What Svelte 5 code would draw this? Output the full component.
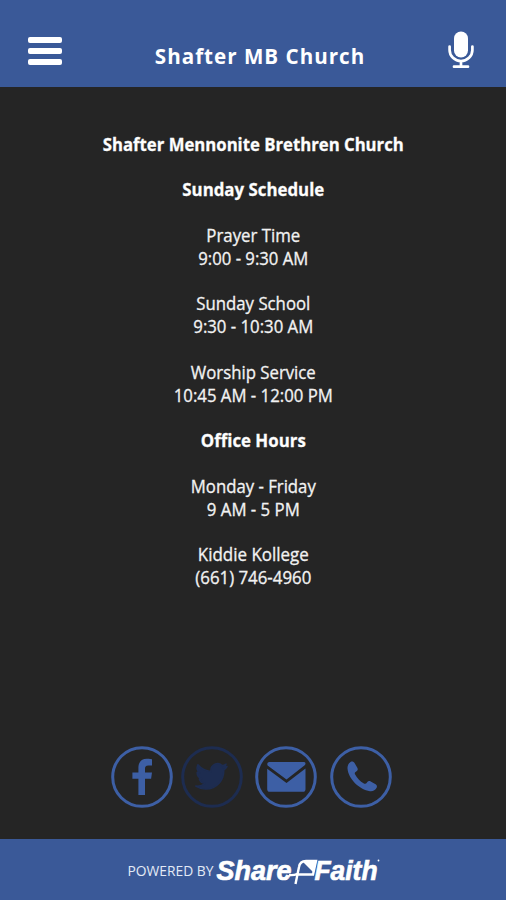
<script lang="ts">
	interface Line {
		text: string;
		width: number;
	}

	interface Block {
		heading?: boolean;
		lines: Line[];
	}

	const blocks: Block[] = [
		{ heading: true, lines: [{ text: 'Shafter Mennonite Brethren Church', width: 301 }] },
		{ heading: true, lines: [{ text: 'Sunday Schedule', width: 142 }] },
		{ lines: [{ text: 'Prayer Time', width: 94 }, { text: '9:00 - 9:30 AM', width: 110 }] },
		{ lines: [{ text: 'Sunday School', width: 114 }, { text: '9:30 - 10:30 AM', width: 120 }] },
		{ lines: [{ text: 'Worship Service', width: 125 }, { text: '10:45 AM - 12:00 PM', width: 159 }] },
		{ heading: true, lines: [{ text: 'Office Hours', width: 105 }] },
		{ lines: [{ text: 'Monday - Friday', width: 125 }, { text: '9 AM - 5 PM', width: 93 }] },
		{ lines: [{ text: 'Kiddie Kollege', width: 111 }, { text: '(661) 746-4960', width: 116 }] }
	];
</script>

<div class="screen">
	<header>
		<button class="menu" aria-label="Menu">
			<span></span>
			<span></span>
			<span></span>
		</button>
		<h1>Shafter MB Church</h1>
		<button class="mic" aria-label="Sermons">
			<svg width="28" height="40" viewBox="0 0 28 40">
				<rect x="7" y="0.5" width="14" height="26" rx="7" fill="#fff" />
				<path d="M2.6 15.5v3.5a11.4 11 0 0 0 22.8 0V15.5M14 30.5v5M7 35.7h14" />
			</svg>
		</button>
	</header>

	<main>
		{#each blocks as block}
			<p class:heading={block.heading}>
				{#each block.lines as line}
					<svg class="line" width="320" height="22.84">
						<text x="160.3" y="17.6" textLength={line.width} lengthAdjust="spacingAndGlyphs">{line.text}</text>
					</svg>
				{/each}
			</p>
		{/each}
	</main>

	<nav>
		<a href="#facebook" aria-label="Facebook">
			<svg viewBox="0 0 62 62">
				<circle cx="31" cy="31" r="29.3" />
				<path d="M41 13.4v6.2h-3.6c-2.8 0-3.4 1.3-3.4 3.3v3.6h7l-.9 6.3H34V49h-6.6V32.800h-6v-6.300h6v-4.800c0-5.700 3.200-8.900 8.500-8.900 2.500 0 4.500.2 5.100.6z" />
			</svg>
		</a>
		<a class="off" href="#twitter" aria-label="Twitter">
			<svg viewBox="0 0 62 62">
				<circle cx="31" cy="31" r="29.3" />
				<path
					class="bird"
					d="M46 20.500c-1.200.6-2.400.9-3.700 1.100 1.300-.8 2.300-2.100 2.800-3.500-1.200.7-2.600 1.300-4 1.500a6.400 6.400 0 0 0-10.900 5.800c-5.300-.3-10-2.800-13.200-6.700a6.400 6.400 0 0 0 2 8.600c-1-.1-2-.3-2.900-.8 0 3.200 2.200 5.800 5.100 6.400-.9.300-1.900.3-2.900.1.8 2.500 3.200 4.400 6 4.400a12.900 12.900 0 0 1-9.500 2.700c2.900 1.900 6.200 2.900 9.800 2.900 12 0 18.500-9.900 18.200-19.100 1.300-.9 2.400-2.100 3.200-3.400z"
				/>
			</svg>
		</a>
		<a href="#email" aria-label="Email">
			<svg viewBox="0 0 62 62">
				<circle cx="31" cy="31" r="29.3" />
				<path d="M14.500 16h34c2 0 2.500 1.200 1.500 3.100L31.500 33.500 12.600 19.600c-.9-1.900 0-3.600 1.900-3.600zM12.200 22.800l19.300 14.200L50.500 22.400v20.800c0 1.600-1 2.600-2.600 2.600H14.800c-1.600 0-2.600-1-2.600-2.600z" />
			</svg>
		</a>
		<a href="#phone" aria-label="Phone">
			<svg viewBox="0 0 62 62">
				<circle cx="31" cy="31" r="29.3" />
				<path d="M20.500 16c1.500-.9 3.400-.2 4.200 1.300l2.600 4.500c.9 1.500.3 2.900-1.100 3.700-1.100.6-1.800 1.600-1.200 2.800 2.100 4 5 7 8.900 9.200 1.200.7 2.300.2 3.100-.9.900-1.400 2.200-1.900 3.700-1.100l4.500 2.500c1.500.8 2.200 2.300 1.400 3.800-1.300 2.500-3.800 3.900-6.600 3.500-10.600-1.600-21.700-12.300-22.500-22.700-.2-2.800.9-5.200 3-6.600z" />
			</svg>
		</a>
	</nav>

	<footer>
		<svg width="260" height="40" viewBox="0 0 260 40">
			<text class="powered" x="4.5" y="26" textLength="86" lengthAdjust="spacingAndGlyphs">POWERED BY</text>
			<g class="brand">
				<text x="93.5" y="29.5" textLength="75" lengthAdjust="spacingAndGlyphs">Share</text>
				<text x="191.5" y="29.5" textLength="63" lengthAdjust="spacingAndGlyphs">Faith</text>
			</g>
			<path class="flag" d="M166 25q5 .5 8-1M172.500 34l3.500-17q1-6 7-6h10l-3 13.500h-16" />
			<path d="M179.5 11.500h13l-2.500 10.500z" />
			<circle cx="255.500" cy="10.500" r="0.9" />
		</svg>
	</footer>
</div>

<style>
	:global(body) {
		margin: 0;
		background: #252525;
	}

	.screen {
		display: flex;
		flex-direction: column;
		width: 506px;
		height: 900px;
		background: #252525;
		color: #fff;
		font-family: 'Open Sans', sans-serif;
		overflow: hidden;
	}

	header {
		display: flex;
		align-items: center;
		justify-content: space-between;
		box-sizing: border-box;
		height: 87px;
		padding: 14px 31px 0 28px;
		background: #3a5998;
	}

	button {
		padding: 0;
		border: 0;
		background: none;
	}

	.menu {
		display: flex;
		flex-direction: column;
		gap: 5px;
		width: 34px;
		padding-top: 1px;
	}

	.menu span {
		height: 6px;
		border-radius: 2px;
		background: #fff;
	}

	h1 {
		margin: 11px 0 0 11px;
		font-size: 20.6px;
		font-weight: 700;
		line-height: 30px;
		letter-spacing: 1px;
		white-space: nowrap;
	}

	.mic {
		height: 40px;
	}

	.mic path {
		fill: none;
		stroke: #fff;
		stroke-width: 2.7;
		stroke-linecap: round;
	}

	main {
		display: flex;
		flex: 1;
		flex-direction: column;
		align-items: center;
		gap: 22.84px;
		padding-top: 45.5px;
	}

	p {
		display: flex;
		flex-direction: column;
		margin: 0;
	}

	.line {
		display: block;
		fill: #f2f2f2;
		stroke: #f2f2f2;
		stroke-width: 0.3;
		font-size: 17.3px;
		text-anchor: middle;
	}

	.heading .line {
		fill: #fff;
		font-weight: 700;
	}

	nav {
		display: grid;
		grid-template-columns: 70px 74.5px 74.5px 62px;
		height: 62px;
		margin: 0 0 31px 110.5px;
	}

	nav a {
		width: 62px;
		height: 62px;
		color: #3d5fa5;
	}

	nav a.off {
		color: #1d2c50;
	}

	nav svg {
		display: block;
		fill: currentColor;
	}

	nav circle {
		fill: none;
		stroke: currentColor;
		stroke-width: 3;
	}

	.bird {
		stroke: currentColor;
		stroke-width: 1.5;
		stroke-linejoin: round;
	}

	footer {
		display: flex;
		align-items: center;
		justify-content: center;
		height: 61px;
		background: #3a5998;
	}

	footer svg {
		display: block;
		fill: #fff;
	}

	.powered {
		font-size: 14px;
		fill: #e3eaf6;
	}

	.brand {
		font: italic 700 28.5px 'Liberation Sans', sans-serif;
		stroke: #fff;
		stroke-width: 0.7;
	}

	.flag {
		fill: none;
		stroke: #fff;
		stroke-width: 2.4;
	}
</style>
